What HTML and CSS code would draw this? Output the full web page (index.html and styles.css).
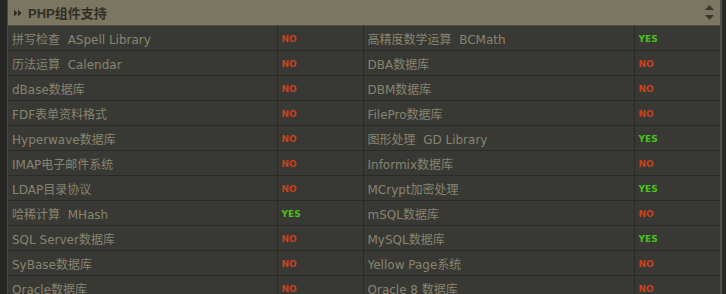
FILE: index.html
```html
<!DOCTYPE html>
<html>
<head>
<meta charset="utf-8">
<link rel="stylesheet" href="styles.css">
</head>
<body>
<div class="panel">
  <div class="head">
    <svg class="ico" width="8" height="8" viewBox="0 0 8 8"><path d="M0 0.5L3.5 4L0 7.5Z M4 0.5L7.5 4L4 7.5Z" fill="#2f2e26"/></svg>
    <span class="title">PHP组件支持</span>
    <div class="scroll">
      <svg width="9" height="5" viewBox="0 0 9 5"><path d="M4.5 0L9 5H0Z" fill="#3a382d"/></svg>
      <svg width="9" height="5" viewBox="0 0 9 5"><path d="M0 0H9L4.5 5Z" fill="#3a382d"/></svg>
    </div>
  </div>
  <table class="grid">
    <colgroup><col class="c1"><col class="c2"><col class="c3"><col class="c4"></colgroup>
    <tr><td>拼写检查&nbsp; ASpell Library</td><td><b class="no">NO</b></td><td>高精度数学运算&nbsp; BCMath</td><td><b class="yes">YES</b></td></tr>
    <tr><td>历法运算&nbsp; Calendar</td><td><b class="no">NO</b></td><td>DBA数据库</td><td><b class="no">NO</b></td></tr>
    <tr><td>dBase数据库</td><td><b class="no">NO</b></td><td>DBM数据库</td><td><b class="no">NO</b></td></tr>
    <tr><td>FDF表单资料格式</td><td><b class="no">NO</b></td><td>FilePro数据库</td><td><b class="no">NO</b></td></tr>
    <tr><td>Hyperwave数据库</td><td><b class="no">NO</b></td><td>图形处理&nbsp; GD Library</td><td><b class="yes">YES</b></td></tr>
    <tr><td>IMAP电子邮件系统</td><td><b class="no">NO</b></td><td>Informix数据库</td><td><b class="no">NO</b></td></tr>
    <tr><td>LDAP目录协议</td><td><b class="no">NO</b></td><td>MCrypt加密处理</td><td><b class="yes">YES</b></td></tr>
    <tr><td>哈稀计算&nbsp; MHash</td><td><b class="yes">YES</b></td><td>mSQL数据库</td><td><b class="no">NO</b></td></tr>
    <tr><td>SQL Server数据库</td><td><b class="no">NO</b></td><td>MySQL数据库</td><td><b class="yes">YES</b></td></tr>
    <tr><td>SyBase数据库</td><td><b class="no">NO</b></td><td>Yellow Page系统</td><td><b class="no">NO</b></td></tr>
    <tr><td>Oracle数据库</td><td><b class="no">NO</b></td><td>Oracle 8 数据库</td><td><b class="no">NO</b></td></tr>
  </table>
</div>
</body>
</html>
```
FILE: styles.css
```css
html, body {
  margin: 0;
  padding: 0;
  background: #272725;
  overflow: hidden;
}
.panel {
  margin-left: 7px;
  width: 712px;
  border-left: 1px solid #4a4a45;
  border-right: 2px solid #4e4e48;
  background: #383835;
}
.head {
  height: 25px;
  background: #7b7661;
  border-bottom: 1px solid #4f4c3e;
  display: flex;
  align-items: center;
  padding-left: 6px;
}
.ico {
  margin-right: 6px;
}
.title {
  font: bold 13px "Liberation Sans", "Noto Sans CJK SC", sans-serif;
  color: #2f2e26;
}
.scroll {
  margin-left: auto;
  margin-right: 6px;
  display: flex;
  flex-direction: column;
  gap: 5px;
}
.scroll svg { display: block; }
.grid {
  width: 712px;
  border-collapse: collapse;
  table-layout: fixed;
  font: 12px "DejaVu Sans", "Noto Sans CJK SC", sans-serif;
  color: #88856f;
}
.c1 { width: 269px; }
.c2 { width: 86px; }
.c3 { width: 271px; }
.c4 { width: 86px; }
.grid td {
  height: 24px;
  padding: 0 0 0 4px;
  border-bottom: 1px solid #2a2a28;
  border-right: 1px solid #2a2a28;
  white-space: nowrap;
  overflow: hidden;
  vertical-align: middle;
}
.grid td:last-child { border-right: none; }
.no, .yes {
  font: bold 9px "DejaVu Sans", sans-serif;
}
.no { color: #c8421d; }
.yes { color: #4cc21c; }
```
